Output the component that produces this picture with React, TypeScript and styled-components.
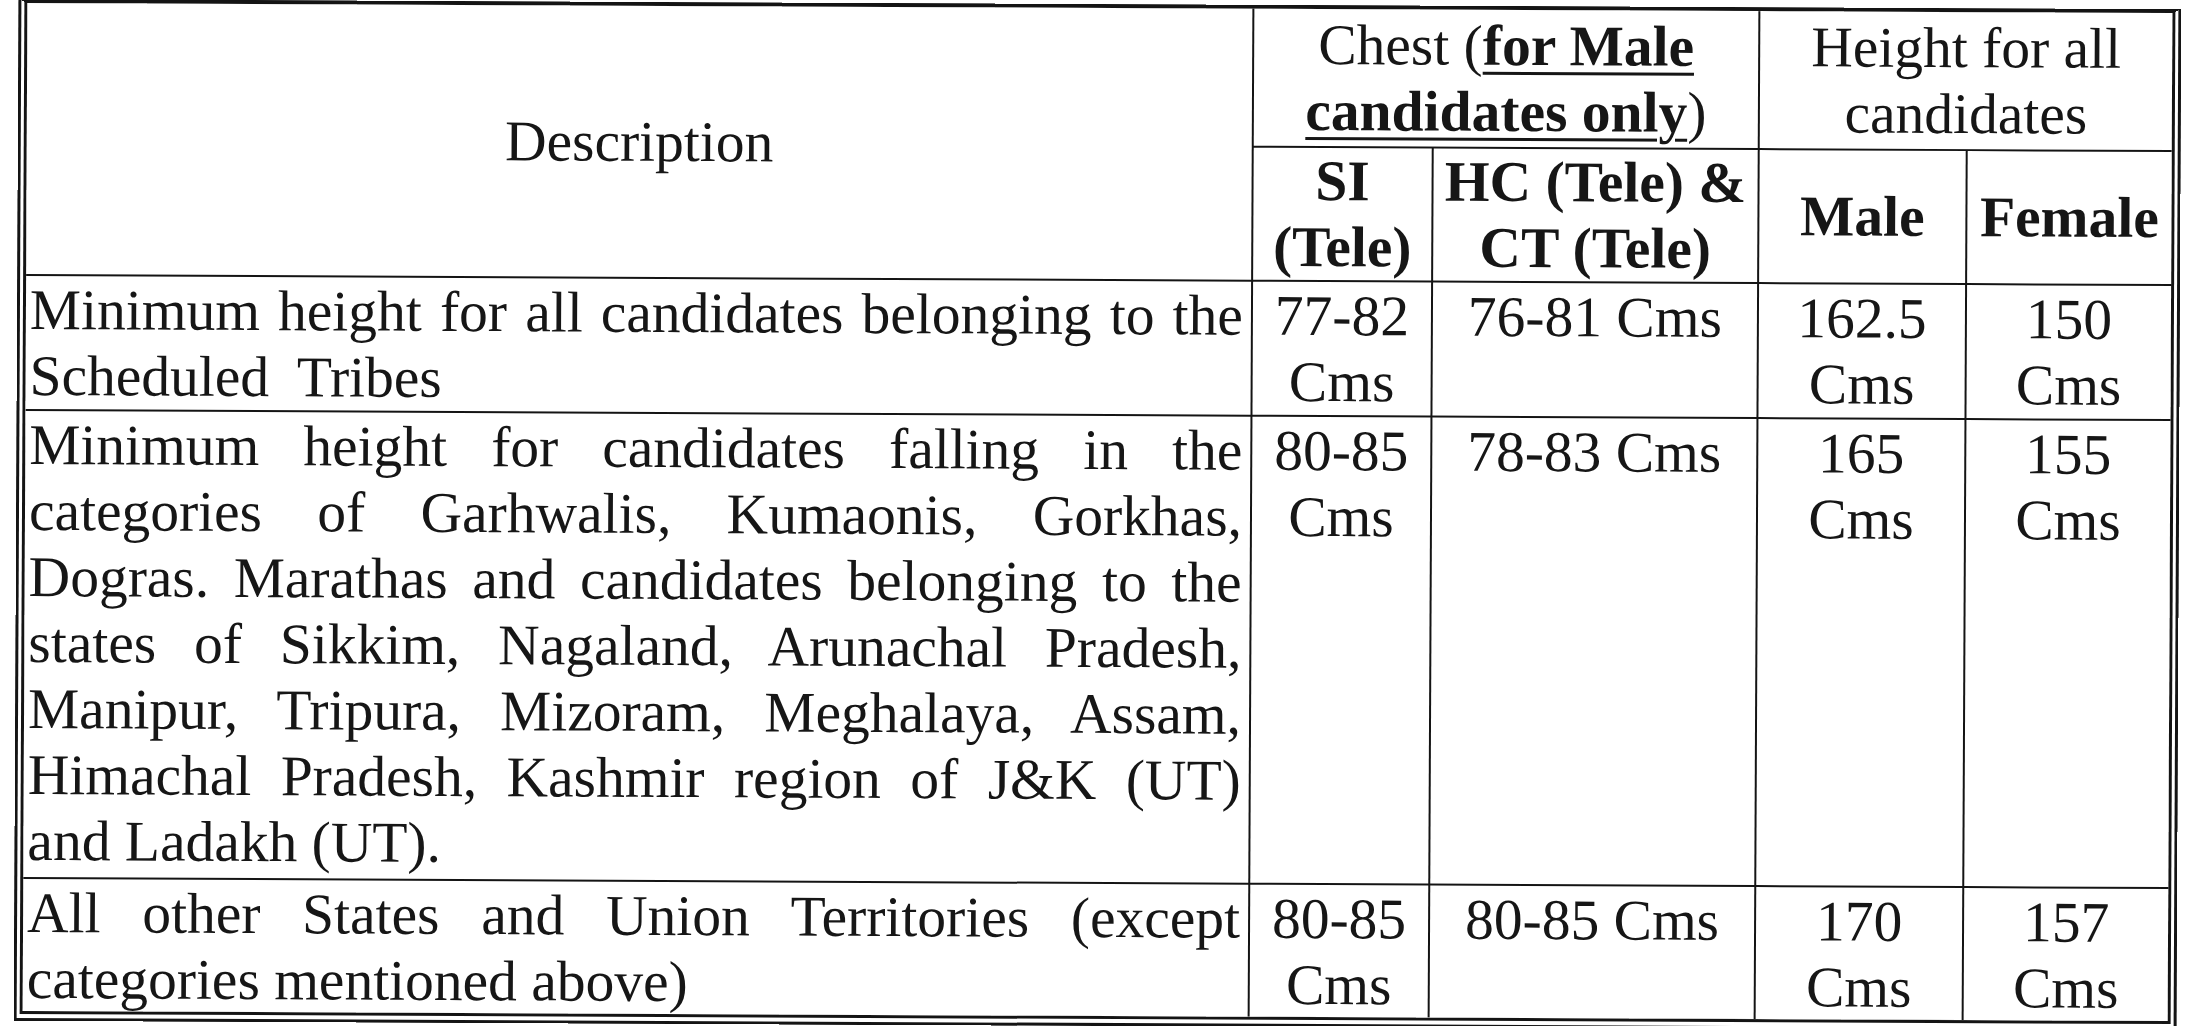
import React from "react";
import styled, { createGlobalStyle } from "styled-components";

const GlobalStyle = createGlobalStyle`
  html, body {
    margin: 0;
    padding: 0;
    background: #ffffff;
    overflow: hidden;
  }
  body {
    width: 2196px;
    height: 1026px;
  }
`;

const INK = "#141414";

const Frame = styled.div`
  box-sizing: content-box;
  width: 2145px;
  margin: 4px 0 0 16px;
  border-top: 4px solid ${INK};
  border-left: 9px double ${INK};
  border-right: 9px double ${INK};
  border-bottom: 10px double ${INK};
  background: #ffffff;
  transform: rotate(0.27deg);
  transform-origin: 50% 50%;
`;

const Grid = styled.div`
  display: grid;
  grid-template-columns: 1225px 178px 324px 206px 204px;
  grid-template-rows: 137px 132px 133px 466px 132px;
  gap: 2px;
  background: ${INK};
  font-family: "Liberation Serif", "Times New Roman", serif;
  font-size: 57.5px;
  color: #161616;
`;

const Cell = styled.div<{ $col: string; $row: string }>`
  grid-column: ${(p) => p.$col};
  grid-row: ${(p) => p.$row};
  background: #ffffff;
  box-sizing: border-box;
  min-width: 0;
`;

const HeadCell = styled(Cell)<{ $bold?: boolean }>`
  display: flex;
  flex-direction: column;
  align-items: center;
  justify-content: center;
  text-align: center;
  line-height: 66px;
  padding: 0 4px;
  font-weight: ${(p) => (p.$bold ? 700 : 400)};
`;

const HeadLine = styled.span`
  display: block;
  white-space: nowrap;
`;

const DescCell = styled(Cell)`
  line-height: 66px;
  text-align: justify;
  padding: 1px 8px 0 4px;
`;

const ValueCell = styled(Cell)`
  line-height: 66px;
  text-align: center;
  padding: 1px 4px 0;
`;

const Emph = styled.span`
  font-weight: 700;
  text-decoration: underline;
  text-decoration-thickness: 3px;
  text-underline-offset: 7px;
`;

type Row = {
  desc: string;
  si: string;
  hc: string;
  male: string;
  female: string;
};

const rows: Row[] = [
  {
    desc: "Minimum height for all candidates belonging to the Scheduled\u00a0 Tribes",
    si: "77-82 Cms",
    hc: "76-81 Cms",
    male: "162.5 Cms",
    female: "150 Cms",
  },
  {
    desc:
      "Minimum height for candidates falling in the categories of Garhwalis, Kumaonis, Gorkhas, Dogras. Marathas and candidates belonging to the states of Sikkim, Nagaland, Arunachal Pradesh, Manipur, Tripura, Mizoram, Meghalaya, Assam, Himachal Pradesh, Kashmir region of J&K (UT) and Ladakh (UT).",
    si: "80-85 Cms",
    hc: "78-83 Cms",
    male: "165 Cms",
    female: "155 Cms",
  },
  {
    desc: "All other States and Union Territories (except categories mentioned above)",
    si: "80-85 Cms",
    hc: "80-85 Cms",
    male: "170 Cms",
    female: "157 Cms",
  },
];

export default function App() {
  return (
    <>
      <GlobalStyle />
      <Frame>
        <Grid>
          <HeadCell $col="1" $row="1 / span 2">
            <HeadLine>Description</HeadLine>
          </HeadCell>
          <HeadCell $col="2 / span 2" $row="1">
            <HeadLine>
              Chest (<Emph>for Male</Emph>
            </HeadLine>
            <HeadLine>
              <Emph>candidates only</Emph>)
            </HeadLine>
          </HeadCell>
          <HeadCell $col="4 / span 2" $row="1">
            <HeadLine>Height for all</HeadLine>
            <HeadLine>candidates</HeadLine>
          </HeadCell>
          <HeadCell $col="2" $row="2" $bold>
            <HeadLine>SI</HeadLine>
            <HeadLine>(Tele)</HeadLine>
          </HeadCell>
          <HeadCell $col="3" $row="2" $bold>
            <HeadLine>HC (Tele) &amp;</HeadLine>
            <HeadLine>CT (Tele)</HeadLine>
          </HeadCell>
          <HeadCell $col="4" $row="2" $bold>
            <HeadLine>Male</HeadLine>
          </HeadCell>
          <HeadCell $col="5" $row="2" $bold>
            <HeadLine>Female</HeadLine>
          </HeadCell>
          {rows.map((r, i) => {
            const row = String(i + 3);
            return (
              <React.Fragment key={i}>
                <DescCell $col="1" $row={row}>
                  {r.desc}
                </DescCell>
                <ValueCell $col="2" $row={row}>
                  {r.si}
                </ValueCell>
                <ValueCell $col="3" $row={row}>
                  {r.hc}
                </ValueCell>
                <ValueCell $col="4" $row={row}>
                  {r.male}
                </ValueCell>
                <ValueCell $col="5" $row={row}>
                  {r.female}
                </ValueCell>
              </React.Fragment>
            );
          })}
        </Grid>
      </Frame>
    </>
  );
}
